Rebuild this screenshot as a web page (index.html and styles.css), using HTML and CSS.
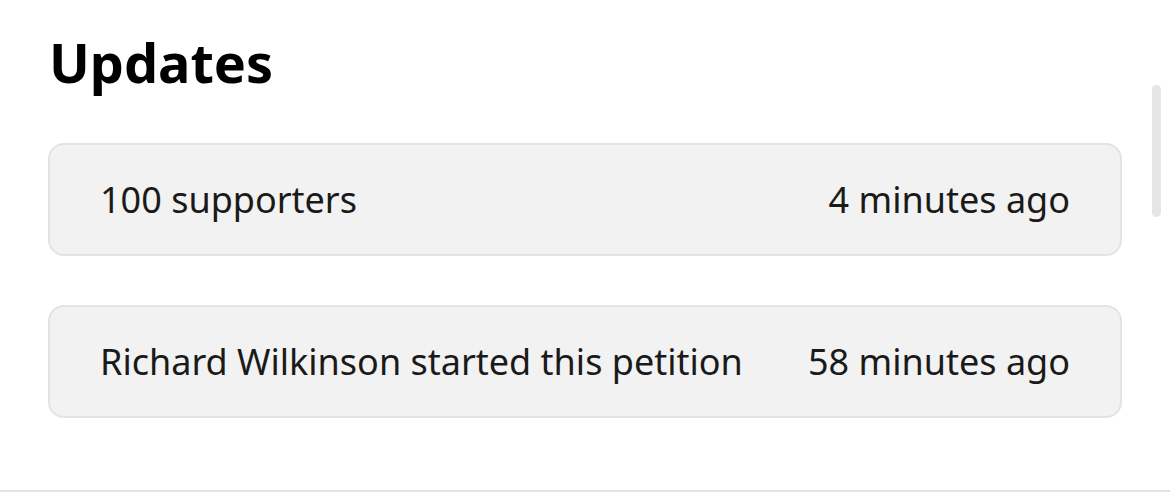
FILE: index.html
```html
<!DOCTYPE html>
<html lang="en">
<head>
    <meta charset="UTF-8">
    <meta name="viewport" content="width=device-width, initial-scale=1.0">
    <title>Updates</title>
    <link rel="stylesheet" href="styles.css">
</head>
<body>
<div class="page">
    <h2 class="title">Updates</h2>
    <div class="updates">
        <div class="update-card">
            <span class="update-text">100 supporters</span>
            <span class="update-time">4 minutes ago</span>
        </div>
        <div class="update-card">
            <span class="update-text">Richard Wilkinson started this petition</span>
            <span class="update-time">58 minutes ago</span>
        </div>
    </div>
    <div class="scroll-thumb"></div>
</div>
</body>
</html>
```

FILE: styles.css
```css
/* Page */
body {
    margin: 0;
    background-color: #fff;
    font-family: "Noto Sans", "Open Sans", sans-serif;
    color: #1a1a1a;
}

.page {
    position: relative;
    height: 490px;
    padding: 0 48px;
    border-bottom: 2px solid #e2e2e2;
}

.title {
    margin: 0;
    padding: 27px 0 0 1px;
    font-size: 54px;
    font-weight: 700;
    line-height: 70px;
    color: #000;
}

/* Update cards */
.updates {
    display: flex;
    flex-direction: column;
    gap: 49px;
    margin-top: 46px;
}

.update-card {
    display: flex;
    justify-content: space-between;
    align-items: center;
    padding: 30px 50px;
    background-color: #f2f2f2;
    border: 2px solid #e3e3e3;
    border-radius: 16px;
    font-size: 36px;
    line-height: 49px;
}

/* Fake scrollbar thumb */
.scroll-thumb {
    position: absolute;
    top: 85px;
    right: 9px;
    width: 9px;
    height: 132px;
    background-color: #e6e6e6;
    border-radius: 5px;
}
```
